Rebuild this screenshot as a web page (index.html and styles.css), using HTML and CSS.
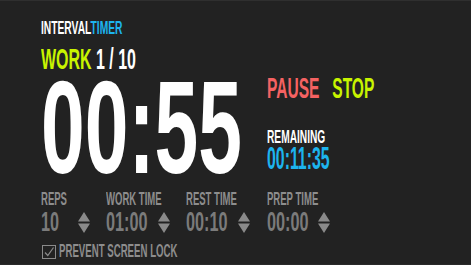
FILE: index.html
```html
<!DOCTYPE html>
<html lang="en">
<head>
<meta charset="utf-8">
<title>Interval Timer</title>
<link rel="stylesheet" href="styles.css">
</head>
<body>
<div class="app">
  <div class="title c"><span class="white">INTERVAL</span><span class="blue">TIMER</span></div>
  <div class="main">
    <div class="left">
      <div class="phase c"><span class="yellow">WORK</span> 1 / 10</div>
      <div class="clock c">00:55</div>
    </div>
    <div class="right">
      <div class="actions c"><span class="pause">PAUSE</span><span class="stop">STOP</span></div>
      <div class="rem-label c">REMAINING</div>
      <div class="rem c">00:11:35</div>
    </div>
  </div>
  <div class="settings">
    <div class="setting reps">
      <div class="label c">REPS</div>
      <div class="row"><span class="val c">10</span><svg class="spin" viewBox="0 0 12 21" width="12" height="21"><path d="M6 0 L12 9.5 L0 9.5 Z M0 11.5 L12 11.5 L6 21 Z"/></svg></div>
    </div>
    <div class="setting work">
      <div class="label c">WORK TIME</div>
      <div class="row"><span class="val c">01:00</span><svg class="spin" viewBox="0 0 12 21" width="12" height="21"><path d="M6 0 L12 9.5 L0 9.5 Z M0 11.5 L12 11.5 L6 21 Z"/></svg></div>
    </div>
    <div class="setting rest">
      <div class="label c">REST TIME</div>
      <div class="row"><span class="val c">00:10</span><svg class="spin" viewBox="0 0 12 21" width="12" height="21"><path d="M6 0 L12 9.5 L0 9.5 Z M0 11.5 L12 11.5 L6 21 Z"/></svg></div>
    </div>
    <div class="setting prep">
      <div class="label c">PREP TIME</div>
      <div class="row"><span class="val c">00:00</span><svg class="spin" viewBox="0 0 12 21" width="12" height="21"><path d="M6 0 L12 9.5 L0 9.5 Z M0 11.5 L12 11.5 L6 21 Z"/></svg></div>
    </div>
  </div>
  <div class="lock">
    <span class="box"><svg viewBox="0 0 14 14" width="14" height="14"><rect x="0.5" y="0.5" width="13" height="13" fill="none" stroke="#8a8a8a"/><path d="M3 7.5 L5.8 10.5 L11.5 2.5" fill="none" stroke="#8a8a8a" stroke-width="1.2"/></svg></span>
    <span class="lock-text c">PREVENT SCREEN LOCK</span>
  </div>
</div>
</body>
</html>
```
FILE: styles.css
```css
html, body {
  margin: 0;
  padding: 0;
}
body {
  width: 471px;
  height: 265px;
  overflow: hidden;
  background: #222222;
  font-family: "Liberation Sans", Arial, sans-serif;
  font-weight: 700;
}
.app {
  box-sizing: border-box;
  width: 471px;
  height: 265px;
  padding: 17px 0 0 41px;
  border-top: 1px solid #2f2f2f;
  border-bottom: 1px solid #2a2a2a;
}
.c {
  white-space: nowrap;
  transform: scaleX(var(--sx, 0.53));
  transform-origin: 0 0;
}
.title {
  font-size: 19px;
  line-height: 19px;
  height: 19px;
  --sx: 0.54;
}
.white { color: #ffffff; }
.blue { color: #1db4ee; }
.yellow { color: #c8f400; }
.main {
  display: flex;
  margin-top: 7px;
}
.left {
  width: 226px;
}
.phase {
  font-size: 30px;
  line-height: 30px;
  color: #ffffff;
  --sx: 0.532;
}
.clock {
  margin-top: 4px;
  font-size: 131px;
  line-height: 100px;
  height: 100px;
  color: #ffffff;
  --sx: 0.6;
}
.right {
  padding-top: 30px;
}
.actions {
  font-size: 29px;
  line-height: 29px;
  --sx: 0.536;
}
.pause { color: #f56262; }
.stop { color: #c8f400; margin-left: 24px; }
.rem-label {
  margin-top: 25px;
  font-size: 18px;
  line-height: 18px;
  color: #ffffff;
  --sx: 0.566;
}
.rem {
  font-size: 30.5px;
  line-height: 24px;
  color: #1db4ee;
  --sx: 0.52;
}
.settings {
  display: grid;
  grid-template-columns: 65px 80px 81px auto;
  margin-top: 12px;
}
.label {
  font-size: 18px;
  line-height: 18px;
  color: #8d8d8d;
  --sx: 0.53;
}
.row {
  display: flex;
  align-items: flex-start;
}
.val {
  display: inline-block;
  font-size: 28px;
  line-height: 28px;
  color: #7b7b7b;
  --sx: 0.58;
}
.reps .val { width: 37px; }
.work .val, .rest .val { width: 52px; }
.prep .val { width: 51px; }
.spin {
  margin-top: 4px;
  fill: #8a8a8a;
}
.lock {
  display: flex;
  align-items: flex-start;
  margin-top: 6px;
}
.box {
  display: block;
  width: 14px;
  height: 14px;
  margin: 3px 0 0 1px;
}
.box svg { display: block; }
.lock-text {
  display: inline-block;
  margin-left: 3px;
  font-size: 18px;
  line-height: 18px;
  color: #8d8d8d;
  --sx: 0.536;
}
```
